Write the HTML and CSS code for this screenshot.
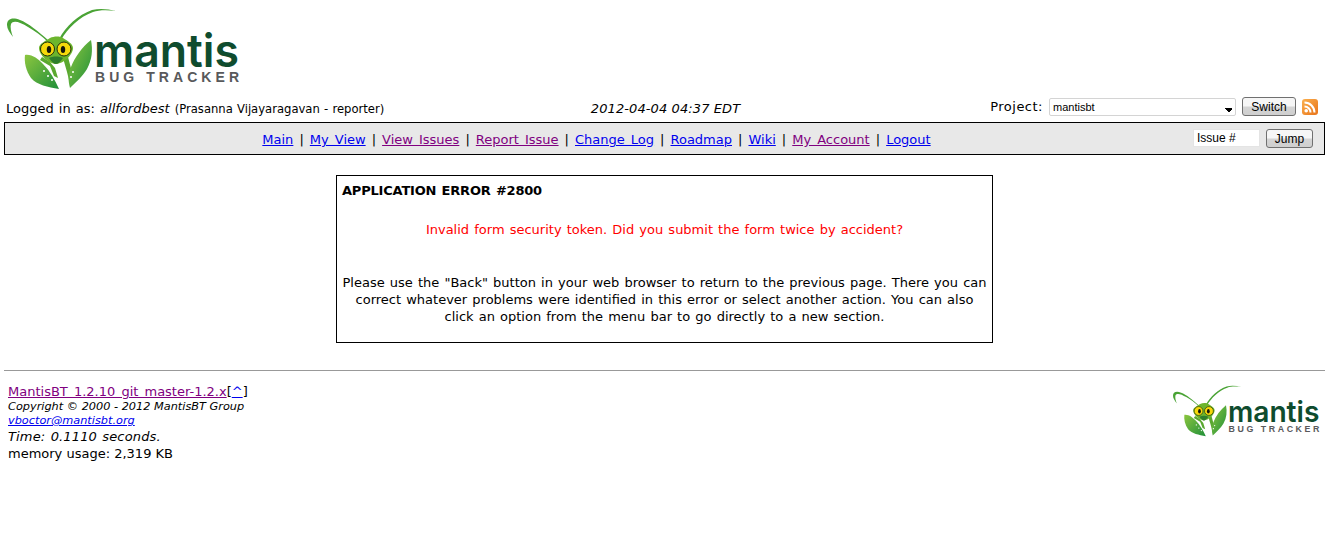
FILE: index.html
```html
<!DOCTYPE html>
<html lang="en">
  <head>
    <meta charset="UTF-8" />
    <title>MantisBT</title>
    <link rel="stylesheet" href="styles.css">
  </head>

  <body>
    <svg class="defs" width="0" height="0">
      <defs>
        <linearGradient id="arm" x1="0" y1="0" x2="1" y2="1">
          <stop offset="0" stop-color="#8cc63f" />
          <stop offset="1" stop-color="#1f8f3a" />
        </linearGradient>
        <linearGradient id="rss-bg" x1="0" y1="0" x2="1" y2="1">
          <stop offset="0" stop-color="#fbb04e" />
          <stop offset="1" stop-color="#e8741a" />
        </linearGradient>
        <g id="mantis-logo">
          <path d="M49 41C38 31 28 23 20 20C12 17 7 19 7 25C7 29 10 33 13 37C11 32 10 27 11 24C13 20 20 22 28 27C35 31 42 36 48 42Z" fill="#4aa335" />
          <path d="M59 39C66 26 78 15 92 10C100 8 108 9 116 11C107 10 99 10 93 12C79 17 68 28 61 40Z" fill="#4aa335" />
          <path d="M40 60L50 66L54 76L58 78L55 68L50 62L42 57Z" fill="#5aa82f" />
          <path d="M63 58L67 72L69 80L72 72L68 57Z" fill="#5aa82f" />
          <path d="M25 55C32 54 38 59 43 64C50 71 55 80 59 89C48 87 37 85 31 78C26 71 24 62 25 55Z" fill="url(#arm)" />
          <path d="M91 40C93 50 92 60 87 69C83 76 76 82 70 88C68 80 68 74 71 67C75 57 82 47 91 40Z" fill="url(#arm)" />
          <circle cx="44" cy="71" r="1" fill="#fff" />
          <circle cx="48" cy="76" r="1" fill="#fff" />
          <circle cx="52" cy="80" r="1" fill="#fff" />
          <circle cx="73" cy="72" r="1" fill="#fff" />
          <circle cx="71" cy="77" r="1" fill="#fff" />
          <path d="M50 38C54 36 60 36 63 38C68 41 73 44 73 48C73 55 63 64 56 64C49 64 39 55 39 48C39 44 45 41 50 38Z" fill="#6cb52d" />
          <path d="M49 58C53 56 59 56 63 58C61 61 58 64 56 64C54 64 51 61 49 58Z" fill="#2f7d2c" />
          <ellipse cx="47.500" cy="49" rx="7" ry="7" fill="#f5d90a" stroke="#20300c" />
          <ellipse cx="64" cy="49" rx="7" ry="7" fill="#f5d90a" stroke="#20300c" />
          <ellipse cx="49" cy="49.500" rx="2.200" ry="3.500" fill="#14160a" />
          <ellipse cx="63" cy="49.500" rx="2.200" ry="3.500" fill="#14160a" />
          <text class="logo-word" x="94" y="67" textLength="145" lengthAdjust="spacingAndGlyphs">mantis</text>
          <text class="logo-sub" x="95" y="82" textLength="144">BUG TRACKER</text>
        </g>
      </defs>
    </svg>

    <div class="logo-row">
      <svg class="logo" viewBox="7 8 233 82"><use href="#mantis-logo" /></svg>
    </div>

    <div class="info-row">
      <div class="login-info">
        Logged in as: <em>allfordbest</em> <small>(Prasanna Vijayaragavan - reporter)</small>
      </div>
      <div class="login-time"><em>2012-04-04 04:37 EDT</em></div>
      <form class="project-form">
        <label for="project">Project:</label>
        <select id="project" class="project-select">
          <option>mantisbt</option>
        </select>
        <button type="button">Switch</button>
        <svg class="rss" viewBox="0 0 16 16">
          <rect width="16" height="16" rx="3" fill="url(#rss-bg)" />
          <circle cx="4.200" cy="11.800" r="1.800" fill="#fff" />
          <path d="M2.500 7.500A6 6 0 0 1 8.500 13.500" fill="none" stroke="#fff" stroke-width="2" />
          <path d="M2.500 3.500A10 10 0 0 1 12.500 13.500" fill="none" stroke="#fff" stroke-width="2" />
        </svg>
      </form>
    </div>

    <div class="menu">
      <nav class="menu-links">
        <a href="#a">Main</a> | <a href="#b">My View</a> | <a class="seen" href="#c">View Issues</a> |
        <a class="seen" href="#d">Report Issue</a> | <a href="#e">Change Log</a> | <a href="#f">Roadmap</a> |
        <a href="#g">Wiki</a> | <a class="seen" href="#h">My Account</a> | <a href="#i">Logout</a>
      </nav>
      <form class="jump-form">
        <input type="text" value="Issue #" />
        <button type="button">Jump</button>
      </form>
    </div>

    <div class="error-box">
      <p class="error-title">APPLICATION ERROR #2800</p>
      <p class="error-text">Invalid form security token. Did you submit the form twice by accident?</p>
      <p class="error-help">
        Please use the "Back" button in your web browser to return to the previous page. There you can
        correct whatever problems were identified in this error or select another action. You can also
        click an option from the menu bar to go directly to a new section.
      </p>
    </div>

    <hr class="rule" />

    <footer class="footer">
      <div class="footer-info">
        <div><a class="seen version" href="#j">MantisBT 1.2.10 git master-1.2.x</a>[<a href="#k">^</a>]</div>
        <address>
          Copyright © 2000 - 2012 MantisBT Group<br />
          <a href="#l">vboctor@mantisbt.org</a>
        </address>
        <div class="timing">Time: 0.1110 seconds.</div>
        <div>memory usage: 2,319 KB</div>
      </div>
      <svg class="footer-logo" viewBox="7 8 233 82"><use href="#mantis-logo" /></svg>
    </footer>
  </body>
</html>
```

FILE: styles.css
```css
body {
  margin: 0;
  padding: 0 4px;
  background: #fff;
  color: #000;
  font-family: "DejaVu Sans", Verdana, sans-serif;
  font-size: 13px;
}

a {
  color: #0000ee;
}

a.seen {
  color: #800080;
}

.defs {
  position: absolute;
}

.logo-row {
  height: 96px;
  padding: 8px 0 0 3px;
  box-sizing: border-box;
}

.logo {
  display: block;
  width: 233px;
  height: 82px;
}

.logo-word {
  font-family: Inter, sans-serif;
  font-weight: 600;
  font-size: 46px;
  fill: #0f4c2e;
}

.logo-sub {
  font-family: "Liberation Sans", sans-serif;
  font-weight: 700;
  font-size: 14px;
  fill: #58595b;
}

.info-row {
  display: grid;
  grid-template-columns: 1fr auto 1fr;
  align-items: center;
  height: 24px;
  margin-bottom: 2px;
  padding-left: 2px;
}

.login-info {
  word-spacing: 1px;
}

.login-info small {
  font-size: 11.6px;
  word-spacing: 0.5px;
}

.login-time {
  letter-spacing: 0.1px;
}

.project-form {
  display: flex;
  align-items: center;
  justify-content: flex-end;
  gap: 6px;
  margin-bottom: 3px;
  padding-right: 7px;
}

.project-form label {
  letter-spacing: 0.5px;
}

.project-select {
  appearance: none;
  width: 187px;
  height: 18px;
  padding: 0 3px;
  border: 1px solid #d4d4d4;
  border-radius: 2px;
  background:
    linear-gradient(45deg, #fff 50%, transparent 50%) right 6px bottom 3px / 4px 4px no-repeat,
    linear-gradient(-45deg, #fff 50%, transparent 50%) right 2px bottom 3px / 4px 4px no-repeat,
    linear-gradient(#000, #000) right 3px bottom 3px / 7px 4px no-repeat,
    #fff;
  font-family: "Liberation Sans", sans-serif;
  font-size: 11px;
}

button {
  width: 54px;
  height: 19px;
  padding: 0;
  border: 1px solid #707070;
  border-radius: 3px;
  background: linear-gradient(#f6f6f6 45%, #d4d4d4 55%, #cfcfcf);
  font-family: "Liberation Sans", sans-serif;
  font-size: 12px;
}

.rss {
  width: 16px;
  height: 16px;
}

.menu {
  display: flex;
  align-items: center;
  height: 33px;
  box-sizing: border-box;
  border: 1px solid #000;
  background: #e8e8e8;
}

.menu-links {
  flex: 1;
  padding-top: 2px;
  text-align: center;
  word-spacing: 1.9px;
}

.jump-form {
  display: flex;
  gap: 6px;
  padding: 0 11px 0 5px;
}

.jump-form input {
  width: 67px;
  height: 18px;
  padding: 0 3px;
  box-sizing: border-box;
  border: 1px solid #e4e4e4;
  font-family: "Liberation Sans", sans-serif;
  font-size: 12px;
}

.jump-form button {
  width: 47px;
}

.error-box {
  width: 657px;
  height: 168px;
  box-sizing: border-box;
  margin: 20px auto 0;
  padding: 0 5px;
  border: 1px solid #000;
  text-align: center;
  word-spacing: 1px;
}

.error-box p {
  margin: 0;
  line-height: 17px;
}

.error-box .error-title {
  padding-top: 6px;
  letter-spacing: -0.2px;
  text-align: left;
  font-weight: 700;
}

.error-box .error-text {
  padding-top: 22px;
  color: #f00;
}

.error-box .error-help {
  padding-top: 36px;
}

.rule {
  height: 1px;
  margin: 27px 0 0;
  border: 0;
  background: #999;
}

.footer {
  display: flex;
  justify-content: space-between;
  padding: 12px 5px 0 4px;
}

.footer-info {
  line-height: 17px;
}

.version {
  word-spacing: 2px;
}

.footer address {
  font-size: 11.3px;
  font-style: italic;
  line-height: 14px;
}

.timing {
  font-style: italic;
  letter-spacing: 0.15px;
  word-spacing: 1px;
}

.footer-logo {
  width: 147px;
  height: 52px;
  margin-top: 2px;
}
```
